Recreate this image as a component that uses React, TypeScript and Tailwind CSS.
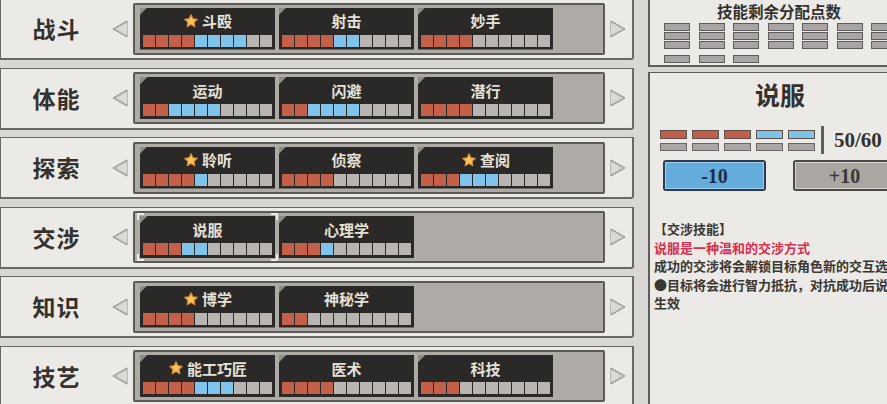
import React from 'react';

interface Skill {
  name: string;
  red: number;
  blue: number;
  star?: boolean;
  selected?: boolean;
}

interface Row {
  label: string;
  skills: Skill[];
}

const ROWS: Row[] = [
  { label: '战斗', skills: [{ name: '斗殴', star: true, red: 4, blue: 4 }, { name: '射击', red: 4, blue: 2 }, { name: '妙手', red: 4, blue: 0 }] },
  { label: '体能', skills: [{ name: '运动', red: 2, blue: 4 }, { name: '闪避', red: 2, blue: 4 }, { name: '潜行', red: 4, blue: 0 }] },
  { label: '探索', skills: [{ name: '聆听', star: true, red: 4, blue: 1 }, { name: '侦察', red: 4, blue: 0 }, { name: '查阅', star: true, red: 3, blue: 3 }] },
  { label: '交涉', skills: [{ name: '说服', red: 3, blue: 2, selected: true }, { name: '心理学', red: 3, blue: 1 }] },
  { label: '知识', skills: [{ name: '博学', star: true, red: 4, blue: 0 }, { name: '神秘学', red: 2, blue: 0 }] },
  { label: '技艺', skills: [{ name: '能工巧匠', star: true, red: 4, blue: 3 }, { name: '医术', red: 4, blue: 0 }, { name: '科技', red: 3, blue: 0 }] },
];

const CJK = "font-['Noto_Sans_CJK_SC',sans-serif]";
const SERIF = "font-['Liberation_Serif','Noto_Sans_CJK_SC',serif]";

function Star() {
  return (
    <svg width="16" height="16" viewBox="0 0 24 24">
      <path
        d="M12 2.5l2.9 6.1 6.6.8-4.9 4.6 1.3 6.6L12 17.3l-5.9 3.3 1.3-6.6-4.9-4.6 6.6-.8z"
        fill="#f7c45e"
        stroke="#e0892c"
        strokeWidth="1.6"
        strokeLinejoin="round"
      />
    </svg>
  );
}

function Arrow({ dir }: { dir: 'left' | 'right' }) {
  return (
    <svg width="16" height="18" viewBox="0 0 16 18">
      {dir === 'left' ? (
        <>
          <polygon points="15,1 15,17 1,9" fill="#c9c7c3" stroke="#8d8b87" strokeWidth="1" />
          <polygon points="15,3 15,15 5,9" fill="#dcdad6" />
        </>
      ) : (
        <>
          <polygon points="1,1 1,17 15,9" fill="#c9c7c3" stroke="#8d8b87" strokeWidth="1" />
          <polygon points="1,3 1,15 11,9" fill="#dcdad6" />
        </>
      )}
    </svg>
  );
}

function Segments({ red, blue }: { red: number; blue: number }) {
  return (
    <div className="flex gap-px">
      {Array.from({ length: 10 }).map((_, i) => (
        <div
          key={i}
          className={`w-3 h-3 ${i < red ? 'bg-[#c2604a]' : i < red + blue ? 'bg-[#80c4ec]' : 'bg-[#b8b5b2]'}`}
        />
      ))}
    </div>
  );
}

function SkillCard({ skill }: { skill: Skill }) {
  return (
    <div className="relative w-[135px] h-[42px] shrink-0">
      <div className="w-full h-full bg-[#2b2927] [clip-path:polygon(7px_0,100%_0,100%_100%,0_100%,0_7px)] flex flex-col items-center pt-[1px]">
        <div className="flex items-center gap-[3px] h-[24px]">
          {skill.star && <Star />}
          <span className={`${CJK} text-[15px] font-bold text-[#e6e1d8] leading-none`}>{skill.name}</span>
        </div>
        <div className="mt-[2px]">
          <Segments red={skill.red} blue={skill.blue} />
        </div>
      </div>
      <div className="absolute left-0 top-0 w-[7px] h-[7px] bg-[#8e8b87] [clip-path:polygon(0_0,100%_0,0_100%)]" />
      {skill.selected && (
        <>
          <div className="absolute -left-[3px] -top-[3px] w-[7px] h-[7px] border-l-2 border-t-2 border-[#eeece8]" />
          <div className="absolute -right-[3px] -top-[3px] w-[7px] h-[7px] border-r-2 border-t-2 border-[#eeece8]" />
          <div className="absolute -left-[3px] -bottom-[3px] w-[7px] h-[7px] border-l-2 border-b-2 border-[#eeece8]" />
          <div className="absolute -right-[3px] -bottom-[3px] w-[7px] h-[7px] border-r-2 border-b-2 border-[#eeece8]" />
        </>
      )}
    </div>
  );
}

function SkillRow({ row }: { row: Row }) {
  return (
    <div className="h-[62px] shrink-0 flex items-center bg-[#ebeae6] border border-[#6a6865] border-b-2 border-r-2 rounded-br-[3px]">
      <div className={`w-[111px] text-center ${CJK} text-[23px] font-bold text-[#34312e] tracking-[1px]`}>{row.label}</div>
      <Arrow dir="left" />
      <div className="ml-[5px] w-[472px] h-[52px] bg-[#aeaba7] border-2 border-[#5c5a57] rounded-[2px] flex items-center gap-[4px] pl-[5px]">
        {row.skills.map((s) => (
          <SkillCard key={s.name} skill={s} />
        ))}
      </div>
      <div className="ml-[5px]">
        <Arrow dir="right" />
      </div>
    </div>
  );
}

export default function App() {
  const pointCols = 8;

  return (
    <div className="w-[887px] h-[404px] overflow-hidden bg-[#d9d7d3] flex">
      {/* Skill categories */}
      <div className="w-[634px] shrink-0 flex flex-col gap-[7.5px] -mt-[2px]">
        {ROWS.map((row) => (
          <SkillRow key={row.label} row={row} />
        ))}
      </div>

      {/* Right side */}
      <div className="ml-[14px] w-[270px] shrink-0 flex flex-col">
        <div className="h-[70px] -mt-[3px] bg-[#ebeae7] border-l-2 border-b-2 border-[#5f5d5a] flex flex-col">
          <div className={`${CJK} text-[15.5px] font-bold text-[#34312e] text-center pr-[10px] mt-[4px] leading-[20px]`}>技能剩余分配点数</div>
          <div className="pl-[14px] mt-[2px] flex flex-col gap-px">
            {[0, 1, 2].map((r) => (
              <div key={r} className="flex gap-[8.5px]">
                {Array.from({ length: pointCols }).map((_, c) => (
                  <div key={c} className="w-[26px] h-[8px] bg-[#aaa5a5] border border-[#5e5b5b] shrink-0" />
                ))}
              </div>
            ))}
            <div className="flex gap-[8.5px] mt-[5px]">
              {[0, 1, 2].map((c) => (
                <div key={c} className="w-[26px] h-[8px] bg-[#aaa5a5] border border-[#5e5b5b] shrink-0" />
              ))}
            </div>
          </div>
        </div>

        <div className="mt-[5px] flex-1 bg-[#ebeae7] border-l-2 border-t border-[#5f5d5a] flex flex-col">
          <div className={`${CJK} text-[25px] font-bold text-[#34312e] text-center pr-[8px] pt-[5px] leading-[32px]`}>说服</div>

          <div className="flex items-center pl-[10px] mt-[16px]">
            <div className="flex gap-[5px]">
              {['bg-[#c0604a]', 'bg-[#c0604a]', 'bg-[#c0604a]', 'bg-[#80c3ea]', 'bg-[#80c3ea]'].map((color, i) => (
                <div key={i} className="flex flex-col gap-[4px]">
                  <div className={`w-[27px] h-[9px] ${color} border border-[#5a4f4a]`} />
                  <div className="w-[27px] h-[8px] bg-[#aba7a6] border border-[#6a6666]" />
                </div>
              ))}
            </div>
            <div className="ml-[6px] w-[3px] h-[28px] bg-[#5f5d5a]" />
            <div className={`ml-[10px] ${SERIF} text-[21px] font-bold text-[#34312e] leading-none`}>50/60</div>
          </div>

          <div className="flex gap-[27px] pl-[13px] mt-[6px]">
            <div className="w-[103px] h-[31px] bg-[#2c3a52] rounded-[3px] p-[2px]">
              <div className={`w-full h-full bg-[#63acdc] border border-[#9fd0ef] flex items-center justify-center ${SERIF} text-[20px] font-bold text-[#1f2d47]`}>-10</div>
            </div>
            <div className="w-[103px] h-[31px] bg-[#4c4a47] rounded-[3px] p-[2px]">
              <div className={`w-full h-full bg-[#aaa7a3] border border-[#d6d4d0] flex items-center justify-center ${SERIF} text-[20px] font-bold text-[#3a3835]`}>+10</div>
            </div>
          </div>

          <div className={`mt-[29px] pl-[4px] ${CJK} text-[13px] font-bold leading-[18.5px] text-[#3a3632] whitespace-nowrap`}>
            <div>【交涉技能】</div>
            <div className="text-[#d7304f]">说服是一种温和的交涉方式</div>
            <div>成功的交涉将会解锁目标角色新的交互选项</div>
            <div>●目标将会进行智力抵抗，对抗成功后说服</div>
            <div>生效</div>
          </div>
        </div>
      </div>
    </div>
  );
}
